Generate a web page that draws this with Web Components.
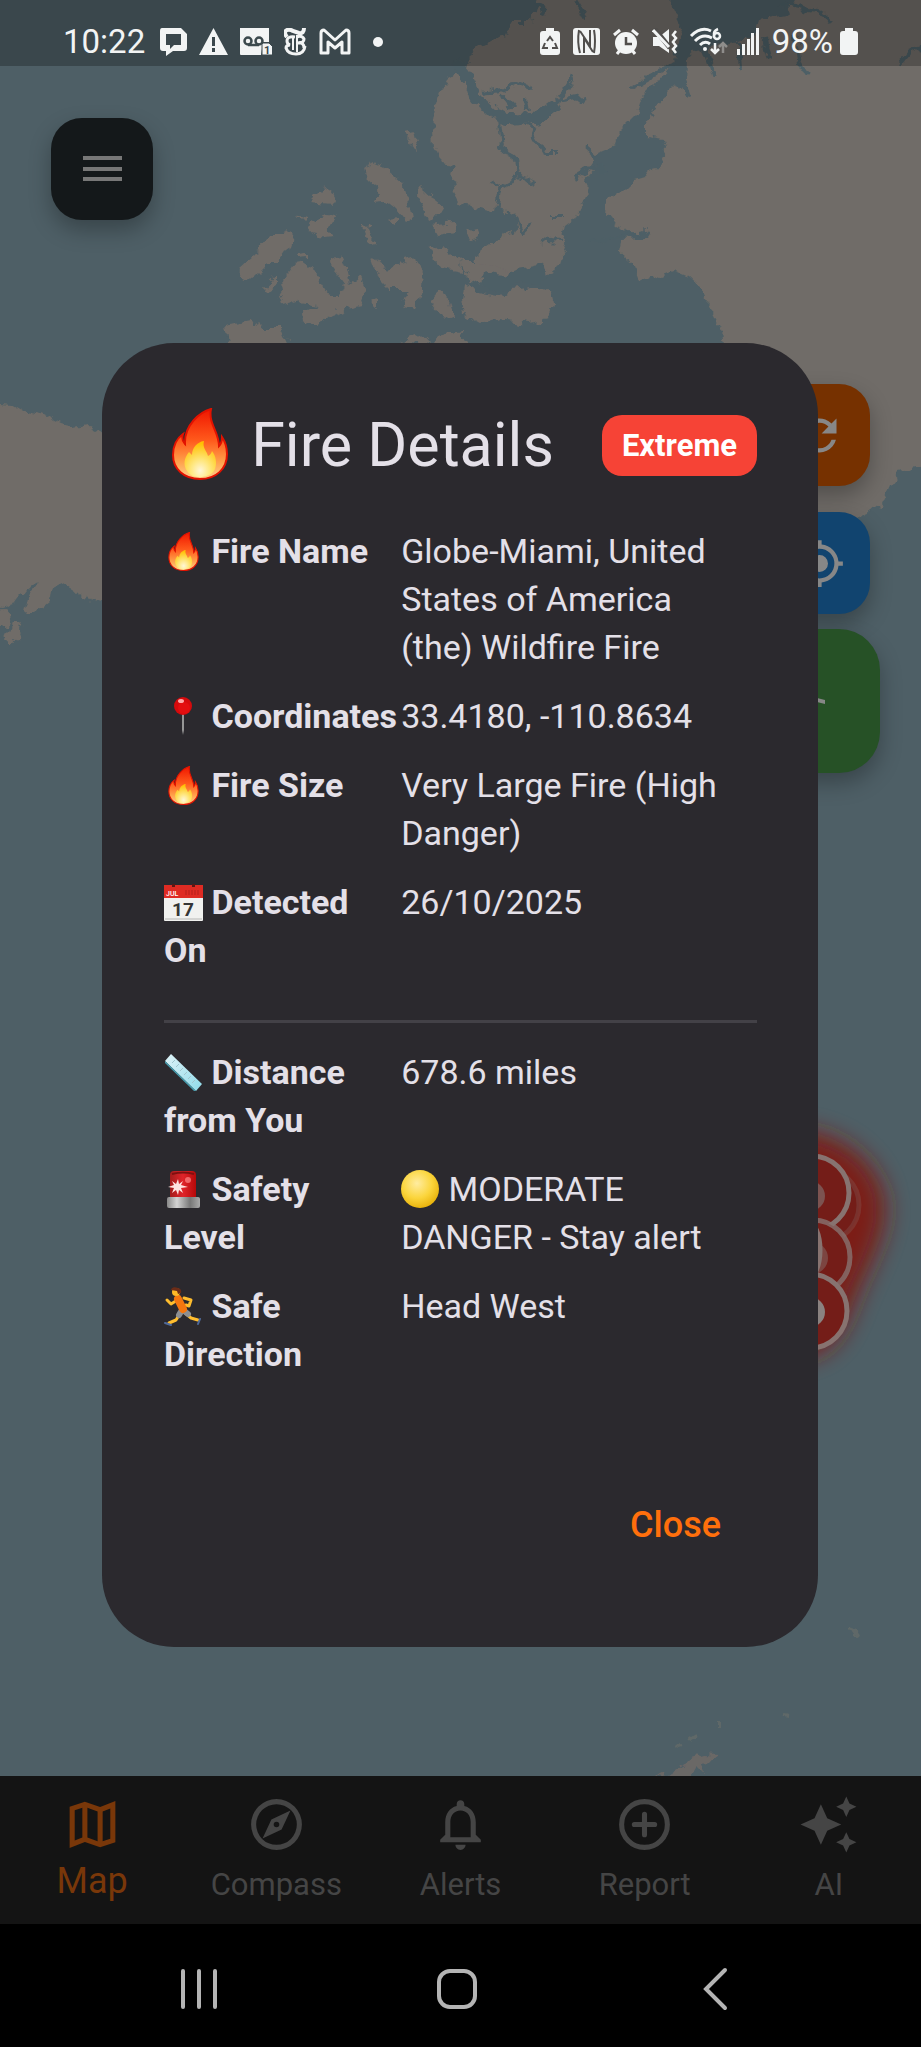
<!DOCTYPE html>
<html lang="en">
<head>
<meta charset="utf-8">
<meta name="viewport" content="width=device-width, initial-scale=1">
<title>Fire Map</title>
<style>
  html, body { margin: 0; height: 100%; background: #000; }
  body { font-family: Roboto, "Noto Sans", sans-serif; color: #e4e0e8; }
</style>
</head>
<body>
<fire-app>
  <world-map slot="map"></world-map>
  <status-bar slot="status"></status-bar>
  <map-controls slot="controls"></map-controls>
  <fire-dialog slot="dialog" heading="Fire Details" level="Extreme">
    <detail-row icon="fire" label="Fire Name">Globe-Miami, United States of America (the) Wildfire Fire</detail-row>
    <detail-row icon="pin" label="Coordinates">33.4180, -110.8634</detail-row>
    <detail-row icon="fire" label="Fire Size">Very Large Fire (High Danger)</detail-row>
    <detail-row icon="calendar" label="Detected On">26/10/2025</detail-row>
    <row-divider></row-divider>
    <detail-row icon="ruler" label="Distance from You">678.6 miles</detail-row>
    <detail-row icon="siren" label="Safety Level"><emoji-icon name="yellow"></emoji-icon> MODERATE DANGER - Stay alert</detail-row>
    <detail-row icon="runner" label="Safe Direction">Head West</detail-row>
  </fire-dialog>
  <nav-bar slot="nav">
    <nav-item icon="map" active>Map</nav-item>
    <nav-item icon="compass">Compass</nav-item>
    <nav-item icon="bell">Alerts</nav-item>
    <nav-item icon="report">Report</nav-item>
    <nav-item icon="ai">AI</nav-item>
  </nav-bar>
  <system-bar slot="system"></system-bar>
</fire-app>

<script>
const define = (name, render) => customElements.define(name, class extends HTMLElement {
  constructor() { super(); this.attachShadow({ mode: 'open' }); }
  connectedCallback() { this.shadowRoot.innerHTML = render(this); }
});

/* ---------- Emoji artwork ---------- */
const EMOJI = {
  fire: `<svg viewBox="0 0 72 72"><defs>
      <linearGradient id="a" x1="0" y1="0" x2="0" y2="1"><stop offset="0" stop-color="#f01600"/><stop offset=".45" stop-color="#ff5a1c"/><stop offset=".75" stop-color="#ffa04a"/><stop offset="1" stop-color="#ffd08a"/></linearGradient>
      <radialGradient id="b" cx=".5" cy=".82" r=".75"><stop offset="0" stop-color="#fffbe0"/><stop offset=".4" stop-color="#ffec80"/><stop offset="1" stop-color="#ffc800"/></radialGradient></defs>
      <path d="M47 1C36 4 20 17 21 36C18 33 18 29 19 26C12 31 9 39 9 47C9 61 20 71 36 71S63 61 63 46C63 38 60 32 58 29C58 33 57 36 55 38C55 24 44 15 47 1Z" fill="url(#a)" stroke="#e21200" stroke-width="2"/>
      <path d="M40 33C33 34 28 40 28 47L25 44C20 50 19 57 23 63C26 68 31 69 36 69S49 67 51 61C53 55 52 48 48 43C47 46 46 47 44 48C43 43 38 40 40 33Z" fill="url(#b)" opacity=".92"/></svg>`,
  pin: `<svg viewBox="0 0 39 39"><path d="M18 17h2v16l-1 5-1-5z" fill="#969696"/><circle cx="19" cy="9" r="9" fill="#d60a0c"/><circle cx="20" cy="11" r="6" fill="#ed1014" opacity=".6"/><ellipse cx="17" cy="4" rx="3" ry="2" fill="#ffaaaa"/></svg>`,
  calendar: `<svg viewBox="0 0 39 39"><rect y="5" width="39" height="33" rx="1" fill="#f1f1ef"/><path d="M0 2h39v13H0z" fill="#df2b23"/><path d="M1 35h37v2H1z" fill="#d4d4d2"/><path d="M8 1h3v3H8zM28 1h3v3h-3z" fill="#5c1714"/><path d="M22 7v5m3-5v5m3-5v5m3-5v5m3-5v5" stroke="#b3201b"/>
      <text x="2" y="13" font-size="7" fill="#fff" font-family="Roboto, sans-serif" font-weight="500">JUL</text><text x="19" y="33" font-size="19" text-anchor="middle" fill="#353535" font-family="Roboto, sans-serif" font-weight="700">17</text></svg>`,
  ruler: `<svg viewBox="0 0 39 39"><defs><linearGradient id="r" x1="0" y1="0" x2="1" y2="1"><stop offset="0" stop-color="#dff3f8"/><stop offset="1" stop-color="#8fdaea"/></linearGradient></defs><path d="M7 1 38 31 32 38 1 8Z" fill="url(#r)"/><path d="M1 8 32 38 30 38 1 10Z" fill="#479daf"/><path d="m11 7-3 3m7 1-3 3m7 1-3 3m7 1-3 3m7 1-3 3m7 1-3 3" stroke="#a0c5ce"/></svg>`,
  siren: `<svg viewBox="0 0 39 39"><defs><linearGradient id="m" x1="0" x2="1"><stop offset="0" stop-color="#888"/><stop offset=".3" stop-color="#d4d4d4"/><stop offset=".7" stop-color="#777"/><stop offset="1" stop-color="#aaa"/></linearGradient><linearGradient id="s" x1="0" x2="1"><stop offset="0" stop-color="#a41c1c"/><stop offset=".5" stop-color="#e0242a"/><stop offset="1" stop-color="#b50909"/></linearGradient></defs>
      <path d="M6 27V5Q6 1 10 1H28Q32 1 32 5V27Z" fill="url(#s)"/><path d="M8 4Q19 1 30 4" stroke="#7d1010" fill="none" stroke-width="2"/><rect x="3" y="27" width="33" height="11" rx="2" fill="url(#m)"/><path d="m14 9 1 5 4-3-2 4 7 2-7 1 2 5-4-3-1 5-2-5-4 3 2-5-6-1 6-2-2-4 4 3z" fill="#ffe3e0"/><circle cx="24" cy="10" r="3" fill="#ff8a8a" opacity=".7"/></svg>`,
  runner: `<svg viewBox="0 0 39 39"><g fill="none" stroke-linecap="round" stroke-linejoin="round"><path d="m15 12-8 5-4-4m17-2 7 2-2 6-3-1" stroke="#ffbd2e" stroke-width="3"/><path d="m21 26 6 5 7 2M17 25l-5 8-7 3" stroke="#ffbd2e" stroke-width="3"/><path d="m18 23-3 5m4-5 5 4" stroke="#8d8f92" stroke-width="6"/><path d="m14 12 5 10" stroke="#f5760f" stroke-width="8"/><path d="m1 36 6 2m29-6-2 5" stroke="#506a9a" stroke-width="2"/></g><circle cx="12" cy="5" r="4" fill="#ffb927"/><path d="M7 3Q8-1 14 1q4 1 3 5l-3 1-1-3z" fill="#6c2c17"/></svg>`,
  yellow: `<svg viewBox="0 0 39 39"><defs><radialGradient id="y" cx=".42" cy=".35" r=".65"><stop offset="0" stop-color="#ffeca0"/><stop offset=".6" stop-color="#fbd53c"/><stop offset="1" stop-color="#e9b40e"/></radialGradient></defs><circle cx="19" cy="19" r="19" fill="url(#y)"/></svg>`
};
define('emoji-icon', el => `<style>
  :host { display: inline-block; width: 39px; height: 39px; vertical-align: -8px; }
  svg { display: block; width: 100%; height: 100%; }
</style>${EMOJI[el.getAttribute('name')]}`);

/* ---------- Shell ---------- */
define('fire-app', () => `<style>
  :host { display: flex; flex-direction: column; min-height: 100vh; position: relative; }
  .stage { flex: 1; position: relative; display: flex; flex-direction: column; overflow: hidden; }
  .map { position: absolute; inset: 0; }
  .front { position: relative; flex: 1; display: flex; flex-direction: column; }
  .dialog { position: absolute; inset: 66px 0 123px; display: grid; align-items: center; }
</style>
<main class="stage"><div class="map"><slot name="map"></slot></div>
<div class="front"><slot name="status"></slot><slot name="controls"></slot></div></main>
<slot name="nav"></slot><slot name="system"></slot>
<div class="dialog"><slot name="dialog"></slot></div>`);

/* ---------- Map ---------- */
define('world-map', () => `<style>
  :host { display: block; height: 100%; background: #4e5f66; }
  svg { display: block; width: 100%; height: 100%; }
</style>
<svg viewBox="0 0 921 1776" preserveAspectRatio="xMidYMin slice" aria-hidden="true">
<defs>
  <filter id="coast" x="-5%" y="-5%" width="110%" height="110%"><feTurbulence type="fractalNoise" baseFrequency=".09" numOctaves="3" seed="4"/><feDisplacementMap in="SourceGraphic" scale="13" xChannelSelector="R" yChannelSelector="G"/></filter>
  <filter id="glow" x="-50%" y="-50%" width="200%" height="200%"><feGaussianBlur stdDeviation="12"/></filter>
</defs>
<g filter="url(#coast)">
  <g fill="#6f6c67">
    <path d="M538-20 538 0 532 22 513 22 505 38 480 45 466 58 462 70 448 78 442 92 436 108 432 130 433 148 440 163 456 165 452 178 455 192 462 205 475 208 492 212 500 206 514 215 516 230 495 240 480 250 475 265 500 270 520 272 535 268 552 274 560 262 567 250 561 240 565 225 576 217 584 200 590 185 585 178 592 170 590 165 598 152 615 145 620 130 635 115 640 100 655 85 665 72 675 60 682 30 672 10 670-20Z"/>
    <path d="M800-20 795 0 785 15 760 20 755 35 735 42 720 45 695 50 686 60 685 80 691 97 682 94 676 84 668 92 655 110 645 125 645 135 665 138 667 150 660 165 652 175 635 180 625 190 608 198 607 215 615 225 630 232 648 235 645 240 620 241 618 250 635 265 640 278 648 282 660 275 673 270 690 277 702 288 712 310 722 330 725 350 760 440 790 540 835 528 868 513 882 503 890 485 900 473 930 466 940-20Z"/>
    <path d="M-20 400 10 403 25 412 45 416 60 424 75 428 88 425 102 432 140 440 140 610 102 602 85 598 70 588 60 582 52 586 50 600 35 612 25 612 30 592 38 580 25 590 15 603 0 608-20 605Z"/>
    <path d="M-20 611 5 610 12 616 8 626-20 632ZM5 640 12 625 22 622 17 640 8 646Z"/>
  </g>
  <g fill="#706c68">
    <path d="M405 134 414 132 418 150 411 145ZM365 167 372 163 388 170 402 182 408 200 412 218 405 222 395 210 385 202 372 203 380 190 368 180ZM418 185 430 195 443 205 440 215 428 220 420 200ZM432 225 454 222 455 232 437 235ZM309 203 322 190 332 188 338 200 330 205ZM310 220 330 211 336 214 330 235 315 237 308 228ZM296 215 305 218 305 224ZM362 223 368 228 376 246 368 240ZM388 220 397 218 397 225ZM239 278 240 268 255 255 268 235 282 235 286 228 293 235 288 250 280 262 268 262 255 275 246 282ZM264 290 277 275 277 282 269 292ZM296 253 308 252 308 256 298 257ZM295 265 308 263 318 280 328 296 341 296 345 286 331 265 340 253 347 270 350 285 360 277 366 290 360 307 345 310 330 315 315 325 303 322 302 312 318 304 300 301 285 305 278 300 285 290 283 280ZM373 260 378 258 388 275 400 262 415 258 423 270 422 290 418 308 402 305 408 290 390 290 380 280ZM428 250 442 246 460 262 462 272 440 268ZM430 303 440 292 450 300 453 315 442 319ZM370 300 378 298 378 307ZM226 325 250 320 265 328 280 328 290 350 230 350ZM400 342 420 334 430 345ZM438 336 460 331 470 350 435 350ZM463 300 465 285 478 293 500 297 512 290 535 287 550 293 553 305 548 318 530 323 500 319 480 323 465 315ZM460 262 475 262 500 268 520 272 545 266 555 274 540 278 490 275 470 285ZM467 230 478 228 480 238 472 243Z"/>
  </g>
  <g fill="none" stroke="#4e5f66" stroke-linejoin="round">
    <path d="M456 62 470 80 475 97 492 113 515 120 538 118 555 106" stroke-width="11"/>
    <path d="M550 109 560 97 575 76M558 103 585 97M484 93 502 90 515 82 532 88M502 95 512 108M500 118 503 150 514 158 518 176 535 183M500 152 498 145M528 124 540 145 545 153 555 153M518 178 500 188 496 210M500 184 492 180M515 218 522 234 532 225M528 110 526 98" stroke-width="4"/>
    <path d="M675 62 648 78 630 88M535 5 548 12M575 0 585 16M780 4 820 12 832 22M795 35 800 65 806 74M765 40 770 60M738 42 740 70M705 48 715 78M900 65 910 52 926 44M605 167 590 168 575 178M598 158 585 146M562 218 550 218M560 242 540 240M590 240 620 237 645 232" stroke-width="4"/>
    <path d="M482 278 500 285 520 276 545 272" stroke-width="15"/>
  </g>
  <path d="M654 1776 662 1770 665 1776 680 1766 692 1758 705 1754 719 1755 712 1761 702 1762 704 1775 697 1768 690 1780Z" fill="#6b6766"/>
  <path d="M675 1748 684 1745M690 1742 700 1736M785 1715 792 1716M716 1724 720 1724M848 1628 854 1630 859 1637" fill="none" stroke="#5f6867" stroke-width="4"/>
</g>
<path d="M760 1135C800 1121 850 1137 872 1170S886 1230 865 1275S845 1350 800 1358L760 1350Z" fill="#7b1d17" filter="url(#glow)"/>
<g fill="#741d18" stroke="#877370" stroke-width="5">
  <circle cx="822" cy="1205" r="37" stroke-opacity=".25"/>
  <circle cx="812" cy="1193" r="37"/><circle cx="810" cy="1196" r="15" fill="#7c5350" stroke="none"/>
  <circle cx="813" cy="1257" r="37" stroke-opacity=".8"/><circle cx="812" cy="1258" r="16" fill="#7c4541" stroke="none"/>
  <ellipse cx="808" cy="1250" rx="12" ry="28" fill="none"/>
  <circle cx="810" cy="1311" r="37"/><circle cx="810" cy="1312" r="15" fill="#8a8280" stroke="none"/>
</g></svg>`);

/* ---------- Status bar ---------- */
define('status-bar', () => `<style>
  :host { display: flex; justify-content: space-between; align-items: center; box-sizing: border-box; height: 66px; padding: 18px 63px 0 63px; background: rgba(0,0,0,.25); color: #f2f4f4; font-size: 33px; line-height: 48px; }
  .group, .charge { display: flex; align-items: center; gap: 12px; }
  .group.end { gap: 13px; } .charge { gap: 7px; }
  svg { display: block; height: 28px; flex: none; fill: #f2f4f4; }
</style>
<div class="group"><span>10:22</span>
  <svg width="30" viewBox="0 0 30 28"><path fill-rule="evenodd" d="M5 0H24L30 6V20Q30 23 27 23H16L9 28V23H6Q3 23 3 20V3Q3 0 5 0ZM9 6V17H13V21L17 17H24V6Z"/></svg>
  <svg width="29" viewBox="0 0 29 28"><path fill-rule="evenodd" d="M14.500 0 29 27H0ZM13 9V18H16V9ZM13 20V24H16V20Z"/></svg>
  <svg width="32" viewBox="0 0 32 28"><path d="M0 0H29V14H23L21 27H1Q0 27 0 26Z"/><g fill="none" stroke="#3b494d" stroke-width="2.500"><circle cx="8" cy="13" r="3.500"/><circle cx="19" cy="13" r="3.500"/><path d="M8 17H19"/></g><path d="M23 15H29L33 19V27H22V16Z" stroke="#3b494d"/><text x="24" y="26" font-size="11" font-weight="700" font-family="Roboto, sans-serif" style="fill:#3b494d">1</text></svg>
  <svg width="23" viewBox="0 0 23 28"><g fill="none" stroke="#f2f4f4"><path d="M3 9Q-1 4 3 2Q6 1 9 3L15 5Q20 6 20 0" stroke-width="4"/><path d="M11 9Q3 8 3 13Q3 16 6 17Q2 17 2 20Q4 26 12 26Q20 26 21 18" stroke-width="3"/><path d="M9 8V22M13 7V24" stroke-width="2"/><path d="M13 9Q18 7 20 11Q20 15 14 15Q20 14 20 20" stroke-width="3"/></g></svg>
  <svg width="32" viewBox="0 0 32 28"><path d="M2 25V5Q2 2 5 2L16 12 27 2Q30 2 30 5V25H23V14L16 20 9 14V25Z" fill="none" stroke="#f2f4f4" stroke-width="3" stroke-linejoin="round"/></svg>
  <svg width="20" viewBox="0 0 20 28"><circle cx="15" cy="14" r="5"/></svg>
</div>
<div class="group end">
  <svg width="20" viewBox="0 0 20 28"><path d="M6 0H14V3H17Q20 3 20 6V24Q20 27 17 27H3Q0 27 0 24V6Q0 3 3 3H6Z"/><path d="M7 13 10 9 13 13M15 15 17 20H12M8 20H3L5 15" fill="none" stroke="#504e4c" stroke-width="2"/></svg>
  <svg width="27" viewBox="0 0 27 28"><rect width="27" height="27" rx="3"/><path d="M6 2Q4 14 7 25M11 25V10L20 24M7 3 17 18V2M21 2Q23 13 21 25" fill="none" stroke="#504e4c" stroke-width="2"/></svg>
  <svg width="26" viewBox="0 0 26 28"><circle cx="13" cy="15" r="11"/><path d="M13 9V16H19" fill="none" stroke="#504e4c" stroke-width="2.500"/><path d="M1 7 7 2M25 7 19 2M4 26 7 22M22 26 19 22" stroke="#f2f4f4" stroke-width="3"/></svg>
  <svg width="26" viewBox="0 0 26 28"><path d="M1 9H7L17 1V25L7 18H1Z"/><path d="M2 0 18 20" stroke="#504e4c" stroke-width="5"/><path d="M1 2 17 19" stroke="#f2f4f4" stroke-width="3"/><path d="m24 3-3 4 3 3-3 4 3 4-3 3 3 4" fill="none" stroke="#f2f4f4" stroke-width="2.500"/></svg>
  <svg width="33" viewBox="0 0 33 28" overflow="visible"><g fill="none" stroke="#f2f4f4" stroke-width="3"><path d="M0 8Q10-2 20 3M4 13Q12 5 21 10M9 17Q14 12 19 16" /><path d="M27 1Q22 3 23 8" stroke-width="2.500"/><circle cx="26" cy="8" r="3" stroke-width="2.500"/><path d="M24 15V25M20 21 24 25 28 21" stroke-width="2.500"/></g><circle cx="14" cy="21" r="2"/><path d="M32 25V15M28 19 32 15 36 19" fill="none" stroke="#8e8d8b" stroke-width="2.500"/></svg>
  <svg width="22" viewBox="0 0 22 28"><path d="M0 21h3v6H0zM5 16h3v11H5zM10 11h3v16h-3zM14 5h3v22h-3zM19 0h3v27h-3z"/></svg>
  <div class="charge"><span>98%</span><svg width="18" viewBox="0 0 18 28"><path d="M5 0H13V3H15Q18 3 18 6V24Q18 27 15 27H3Q0 27 0 24V6Q0 3 3 3H5Z"/></svg></div>
</div>`);

/* ---------- Floating map buttons ---------- */
define('map-controls', () => `<style>
  :host { display: flex; justify-content: space-between; align-items: flex-start; padding: 52px 41px 0 51px; }
  button { display: grid; place-items: center; width: 102px; height: 102px; padding: 0; border: 0; border-radius: 31px; box-shadow: 0 10px 22px rgba(0,0,0,.28); }
  .menu { background: #14181a; } .refresh { background: #763100; } .locate { background: #11446f; }
  .route { background: #265126; width: 122px; height: 144px; border-radius: 41px; }
  .side { display: grid; justify-items: center; gap: 15px; padding-top: 266px; }
  .pair { display: grid; gap: 26px; }
  svg { width: 61px; height: 61px; fill: #878787; display: block; }
  .pair svg { width: 51px; height: 51px; }
</style>
<button class="menu" aria-label="Menu"><svg viewBox="0 0 61 61"><path d="M11 17h39v4H11zM11 28h39v4H11zM11 38h39v4H11z" fill="#777"/></svg></button>
<div class="side"><div class="pair">
<button class="refresh" aria-label="Refresh"><svg viewBox="0 0 24 24"><path d="M17.650 6.350A8 8 0 1 0 19.730 14h-2.080A6 6 0 1 1 12 6c1.660 0 3.140.69 4.220 1.780L13 11h7V4z"/></svg></button>
<button class="locate" aria-label="My location"><svg viewBox="0 0 24 24"><path d="M12 8a4 4 0 1 0 0 8 4 4 0 0 0 0-8zm8.940 3A9 9 0 0 0 13 3.060V1h-2v2.060A9 9 0 0 0 3.060 11H1v2h2.060A9 9 0 0 0 11 20.940V23h2v-2.060A9 9 0 0 0 20.940 13H23v-2zM12 19a7 7 0 1 1 0-14 7 7 0 0 1 0 14z"/></svg></button></div>
<button class="route" aria-label="Safe route"><svg viewBox="0 0 61 61"><path d="M20 25 36 29V33L20 29Z"/></svg></button></div>`);

/* ---------- Dialog ---------- */
define('fire-dialog', el => `<style>
  :host { display: block; box-sizing: border-box; margin: 0 103px 0 102px; padding: 61px 61px 61px 62px; background: #2b292e; border-radius: 72px; }
  header { display: flex; align-items: center; justify-content: space-between; }
  h1 { margin: 0; font-size: 61px; line-height: 82px; font-weight: 400; white-space: nowrap; }
  h1 emoji-icon { width: 72px; height: 72px; vertical-align: -14px; }
  .badge { padding: 0 20px; border-radius: 20px; background: #f64336; color: #fff; font-size: 31px; line-height: 61px; font-weight: 700; }
  .rows { display: grid; gap: 21px; padding: 41px 0 85px; }
  footer { display: flex; justify-content: flex-end; }
  button { height: 123px; padding: 0 36px; border: 0; background: none; font: 500 36px/48px Roboto, sans-serif; color: #ff6f0c; }
</style>
<header><h1><emoji-icon name="fire"></emoji-icon> ${el.getAttribute('heading')}</h1><span class="badge">${el.getAttribute('level')}</span></header>
<div class="rows" role="list"><slot></slot></div>
<footer><button>Close</button></footer>`);
define('detail-row', el => {
  const [first, ...rest] = el.getAttribute('label').split(' ');
  return `<style>
  :host { display: grid; grid-template-columns: 2fr 3fr; font-size: 34px; line-height: 48px; }
  .label, .value { min-width: 0; }
  .label { font-weight: 700; padding-right: 8px; }
  .lead { white-space: nowrap; }
  .value { padding-right: 20px; }
</style><div class="label"><span class="lead"><emoji-icon name="${el.getAttribute('icon')}"></emoji-icon> ${first}</span> ${rest.join(' ')}</div><div class="value"><slot></slot></div>`;
});
define('row-divider', () => `<style>:host { display: block; height: 3px; margin: 25px 0 4px; background: #434147; }</style>`);

/* ---------- Bottom navigation ---------- */
const NAV = {
  map: '<path fill-rule="evenodd" d="M15 5.100 9 3 3 5.020v16.200l6-2.330 6 2.100 6-2.020V2.770zM10 5.450l4 1.400v11.700l-4-1.400zM5 6.430l3-1.010v11.700l-3 1.160zM19 17.570l-3 1.010V6.890l3-1.160z"/>',
  compass: '<path fill-rule="evenodd" d="M12 2a10 10 0 1 0 0 20 10 10 0 0 0 0-20zm0 18a8 8 0 1 1 0-16 8 8 0 0 1 0 16zM6.500 17.500l7.510-3.490L17.500 6.500 9.990 9.990zM12 10.900a1.100 1.100 0 1 1 0 2.200 1.100 1.100 0 0 1 0-2.200z"/>',
  bell: '<path d="M12 22c1.100 0 2-.9 2-2h-4c0 1.100.89 2 2 2zm6-6v-5c0-3.070-1.640-5.640-4.500-6.320V4c0-.83-.67-1.500-1.500-1.500s-1.500.67-1.500 1.500v.68C7.630 5.360 6 7.920 6 11v5l-2 2v1h16v-1l-2-2zm-2 1H8v-6c0-2.480 1.510-4.500 4-4.500s4 2.020 4 4.500v6z"/>',
  report: '<g fill="none" stroke="currentColor" stroke-width="2" stroke-linecap="round"><circle cx="12" cy="12" r="9"/><path d="M12 8v8M8 12h8"/></g>',
  ai: '<path d="M19 9l1.250-2.750L23 5l-2.750-1.250L19 1l-1.250 2.750L15 5l2.750 1.250L19 9zm-7.500.5L9 4 6.500 9.500 1 12l5.500 2.500L9 20l2.500-5.500L17 12l-5.500-2.500zM19 15l-1.250 2.750L15 19l2.750 1.250L19 23l1.250-2.750L23 19l-2.750-1.250L19 15z"/>'
};
define('nav-bar', () => `<style>
  :host { display: block; background: #141414; }
  nav { display: grid; grid-template-columns: repeat(5, 1fr); height: 148px; }
</style><nav aria-label="Main"><slot></slot></nav>`);
define('nav-item', el => `<style>
  :host { display: block; color: #454545; font-size: 31px; line-height: 44px; }
  :host([active]) { color: #793709; font-size: 36px; line-height: 36px; }
  a { display: flex; flex-direction: column; align-items: center; gap: 8px; padding-top: 18px; color: inherit; text-decoration: none; }
  svg { width: 61px; height: 61px; fill: currentColor; }
</style><a href="#${el.getAttribute('icon')}"><svg viewBox="0 0 24 24" aria-hidden="true">${NAV[el.getAttribute('icon')]}</svg><span><slot></slot></span></a>`);

/* ---------- System buttons ---------- */
define('system-bar', () => `<style>
  :host { display: grid; grid-template-columns: repeat(3, 1fr); height: 123px; padding: 0 76px 0 70px; background: #000; }
  button { display: grid; place-items: center; padding: 6px 0 0; border: 0; background: none; }
  svg { width: 44px; height: 44px; fill: none; stroke: #b4b4b4; stroke-width: 4; stroke-linecap: round; }
</style>
<button aria-label="Recent apps"><svg viewBox="0 0 44 44"><path d="M6 4V40M22 4V40M38 4V40"/></svg></button>
<button aria-label="Home"><svg viewBox="0 0 44 44"><rect x="4" y="4" width="36" height="36" rx="11"/></svg></button>
<button aria-label="Back"><svg viewBox="0 0 44 44"><path d="M31 3 12 22 31 41"/></svg></button>`);
</script>
</body>
</html>
